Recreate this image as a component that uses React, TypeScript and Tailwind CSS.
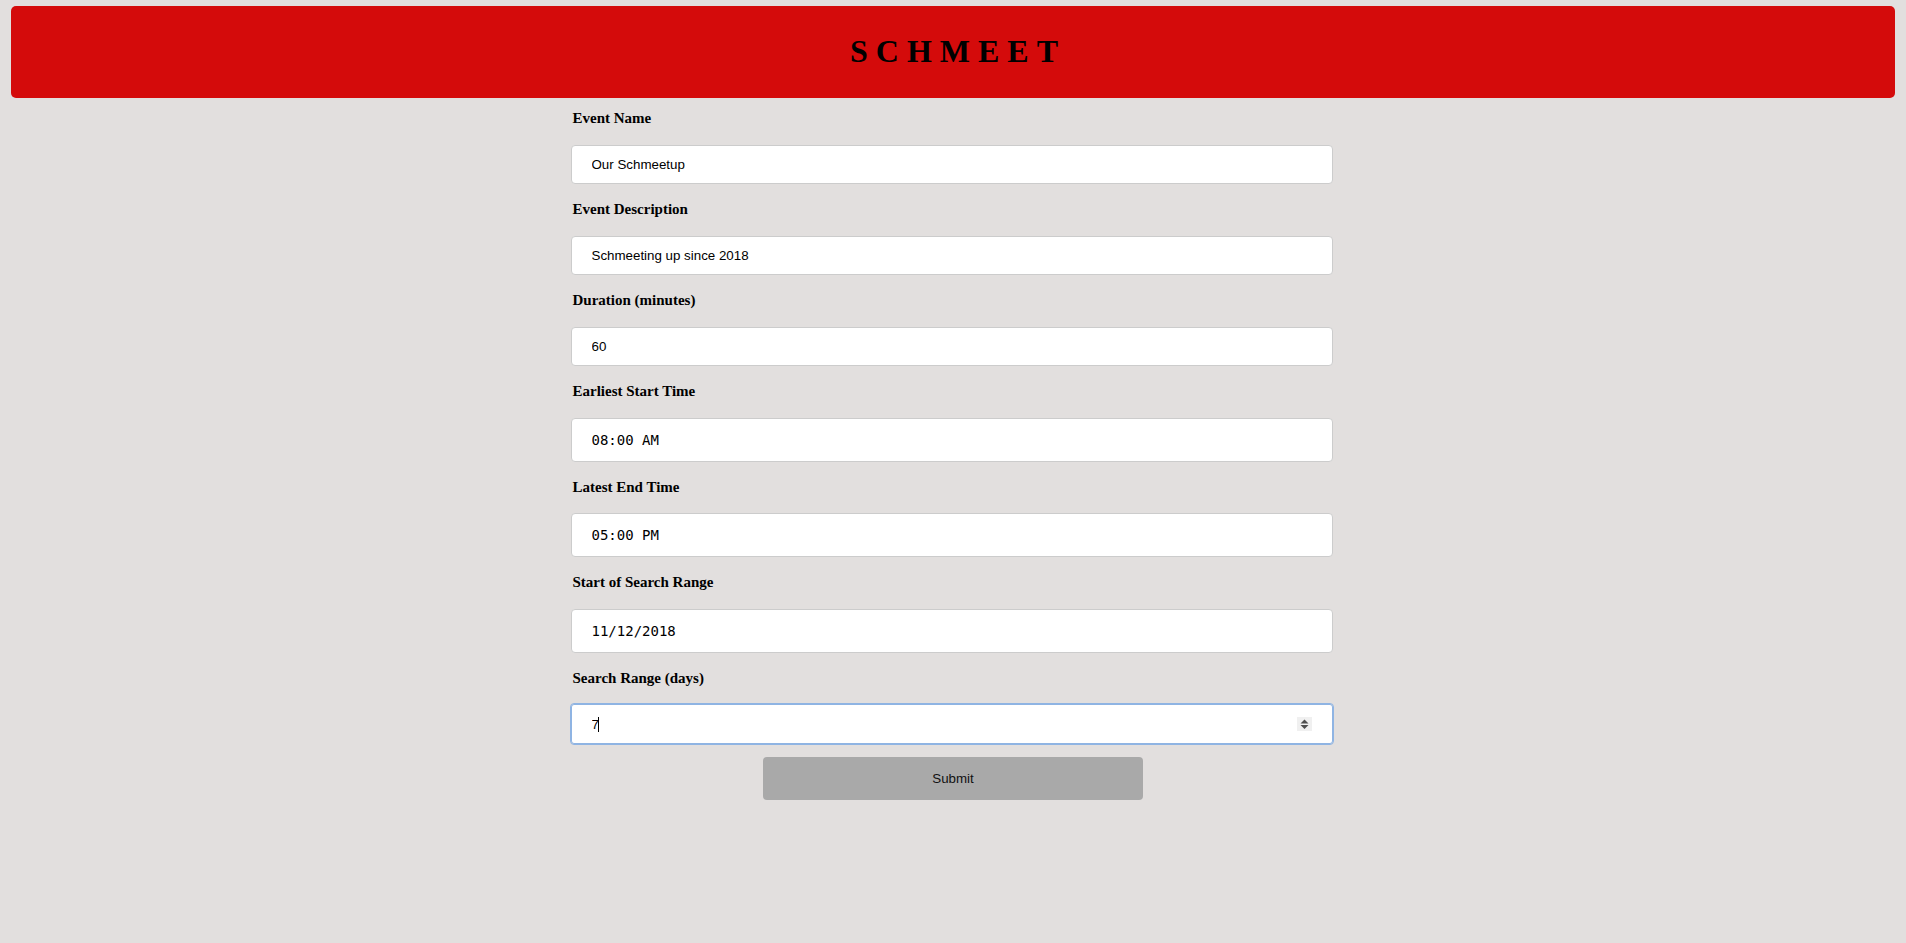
import React from "react";

const fields: { label: string; value: string; kind: "text" | "mono" }[] = [
  { label: "Event Name", value: "Our Schmeetup", kind: "text" },
  { label: "Event Description", value: "Schmeeting up since 2018", kind: "text" },
  { label: "Duration (minutes)", value: "60", kind: "text" },
  { label: "Earliest Start Time", value: "08:00 AM", kind: "mono" },
  { label: "Latest End Time", value: "05:00 PM", kind: "mono" },
  { label: "Start of Search Range", value: "11/12/2018", kind: "mono" },
];

const labelCls =
  "block font-['Liberation_Serif',serif] text-[15px] font-bold leading-[18px] text-black pl-[2px] mb-[17.5px]";

export default function App() {
  return (
    <div className="min-h-screen bg-[#e2dfde] pt-[6px] pb-10">
      {/* Header */}
      <header className="mx-[11px] h-[92px] pb-[2px] rounded-[5px] bg-[#d40b0b] flex items-center justify-center">
        <h1 className="font-['Liberation_Serif',serif] text-[32px] font-bold tracking-[8px] pl-[10px] text-black">
          SCHMEET
        </h1>
      </header>

      <div className="w-[765px] mx-auto pr-[3px]">
        <form className="flex flex-col pt-[11px]" onSubmit={(e) => e.preventDefault()}>
          {fields.map((f, i) => (
            <div key={f.label} className={i === 0 ? "" : "mt-4"}>
              <label className={labelCls}>{f.label}</label>
              <input
                type="text"
                defaultValue={f.value}
                className={
                  f.kind === "mono"
                    ? "block w-full h-[44px] px-5 rounded-[4px] border border-[#cccccc] bg-white font-['DejaVu_Sans_Mono',monospace] text-[14px] text-black outline-none"
                    : "block w-full h-[39.5px] px-5 rounded-[4px] border border-[#cccccc] bg-white font-['Liberation_Sans',Arial,sans-serif] text-[13.33px] text-black outline-none"
                }
              />
            </div>
          ))}

          <div className="mt-4">
            <label className={labelCls}>Search Range (days)</label>
            <div className="relative">
              <input
                type="text"
                defaultValue="7"
                className="block w-full h-[40px] pl-5 pr-12 rounded-[3px] border border-[#8fb4e3] outline outline-1 outline-[#8fb4e3] bg-white font-['Liberation_Sans',Arial,sans-serif] text-[13.33px] text-black"
              />
              {/* text caret */}
              <span className="absolute left-[27px] top-[13px] w-px h-[15px] bg-black" />
              {/* spin buttons */}
              <div className="absolute right-[21px] top-[13px] w-[15px] h-[14px] bg-[#f0f0f0]">
                <svg width="15" height="14" viewBox="0 0 15 14">
                  <polygon points="3.5,6.5 11.5,6.5 7.5,2.5" fill="#4f4f4f" />
                  <polygon points="3.5,8 11.5,8 7.5,12" fill="#4f4f4f" />
                </svg>
              </div>
            </div>
          </div>

          <button
            type="submit"
            className="mt-[13px] ml-[192.5px] w-[380px] h-[43px] rounded-[4px] bg-[#a9a9a9] font-['Liberation_Sans',Arial,sans-serif] text-[13.33px] text-[#111]"
          >
            Submit
          </button>
        </form>
      </div>
    </div>
  );
}
